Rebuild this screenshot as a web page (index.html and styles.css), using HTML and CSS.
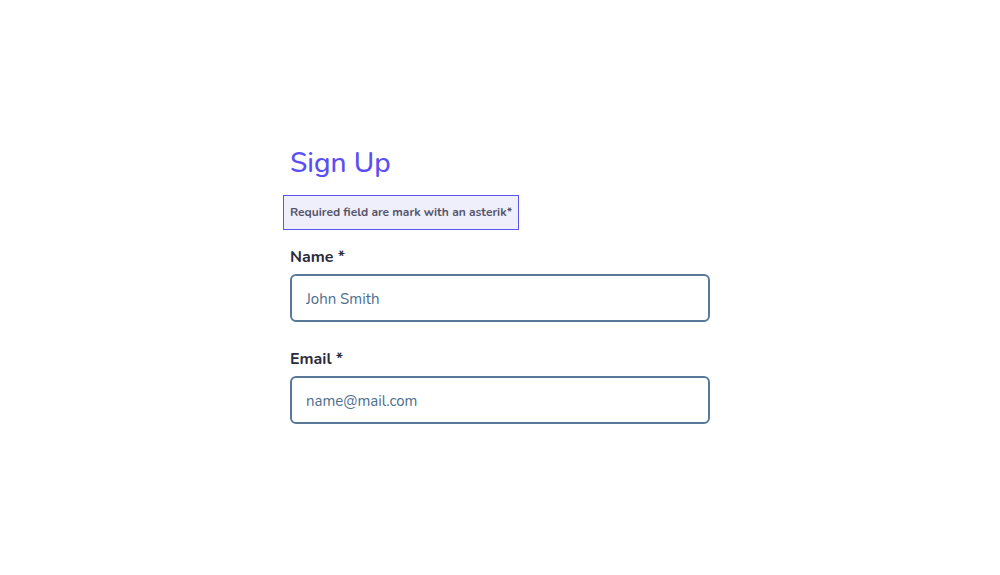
FILE: index.html
```html
<!DOCTYPE html>
<html lang="en">
<head>
    <meta charset="UTF-8">
    <meta name="viewport" content="width=device-width, initial-scale=1.0">
    <title>Sign Up</title>
    <link rel="stylesheet" href="styles.css">
</head>
<body>

<form class="signup">
    <h1>Sign Up</h1>
    <p class="notice">Required field are mark with an asterik*</p>

    <div class="field">
        <label for="name">Name *</label>
        <input type="text" id="name" placeholder="John Smith">
    </div>

    <div class="field">
        <label for="email">Email *</label>
        <input type="email" id="email" placeholder="name@mail.com">
    </div>
</form>

</body>
</html>
```

FILE: styles.css
```css
/* Estilos globais */
* {
    margin: 0;
    padding: 0;
    box-sizing: border-box;
}

body {
    font-family: 'Nunito', 'Lato', 'Noto Sans', sans-serif;
    background-color: #fff;
    color: #2b2b3a;
    display: flex;
    align-items: center;
    justify-content: center;
    min-height: 100vh;
}

.signup {
    width: 420px;
    display: flex;
    flex-direction: column;
    margin-top: -7px;
}

h1 {
    font-size: 28px;
    font-weight: 500;
    line-height: 38px;
    color: #5a4ff2;
    margin-bottom: 13px;
}

.notice {
    align-self: flex-start;
    margin-left: -7px;
    padding: 8px 6px;
    font-size: 12px;
    font-weight: 700;
    line-height: 17px;
    color: #55556a;
    background-color: #efeffc;
    border: 1px solid #5a55f0;
    margin-bottom: 15px;
}

.field {
    display: flex;
    flex-direction: column;
    gap: 5px;
    margin-bottom: 25px;
}

.field:last-child {
    margin-bottom: 0;
}

label {
    font-size: 16px;
    font-weight: 700;
    line-height: 24px;
    color: #2b2b3a;
}

input {
    width: 100%;
    height: 48px;
    padding: 1px 14px 0;
    font-family: inherit;
    font-size: 15px;
    color: #2b2b3a;
    border: 2px solid #587a98;
    border-radius: 6px;
    outline: none;
}

input::placeholder {
    color: #4d6d8d;
    opacity: 1;
}
```
